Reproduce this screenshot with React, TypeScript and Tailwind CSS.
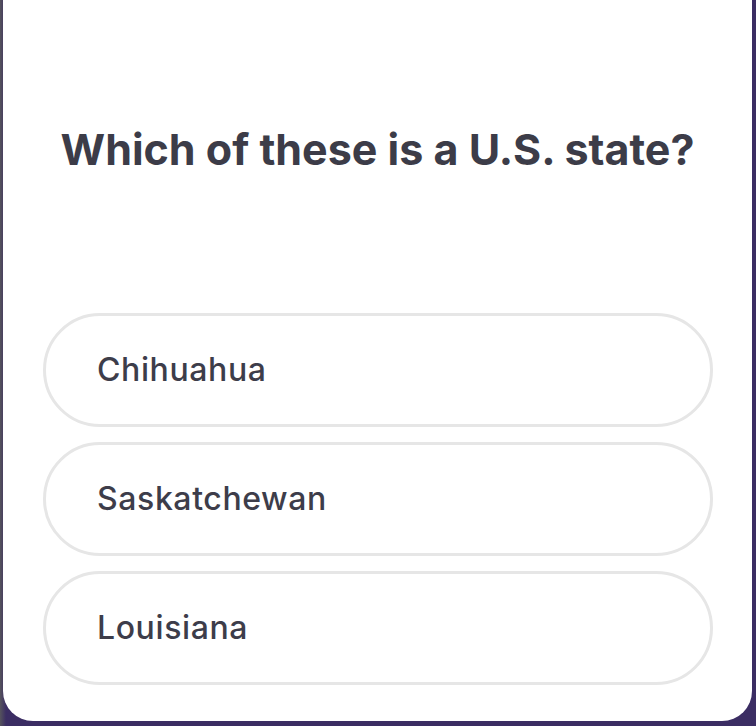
const options = ['Chihuahua', 'Saskatchewan', 'Louisiana'];

export default function App() {
  return (
    <div className="w-[756px] h-[726px] overflow-hidden bg-[linear-gradient(90deg,#55535c_0px,#3b2d63_6px,#3b2d63_100%)] pl-[3px] pr-[4px] pb-[5px]">
      <div className="h-full bg-white rounded-b-[30px] px-[40px] pt-[123px] font-['Inter',sans-serif]">
        <h1 className="text-center text-[43px] leading-[52px] font-bold text-[#3c3c48]">
          Which of these is a U.S. state?
        </h1>
        <div className="mt-[138px] flex flex-col gap-[15px]">
          {options.map((opt) => (
            <button
              key={opt}
              className="h-[114px] w-[670px] rounded-full border-[3px] border-[#e6e6e6] bg-white pl-[51px] text-left text-[32px] font-medium tracking-[0.6px] text-[#3d3d4a]"
            >
              {opt}
            </button>
          ))}
        </div>
      </div>
    </div>
  );
}
